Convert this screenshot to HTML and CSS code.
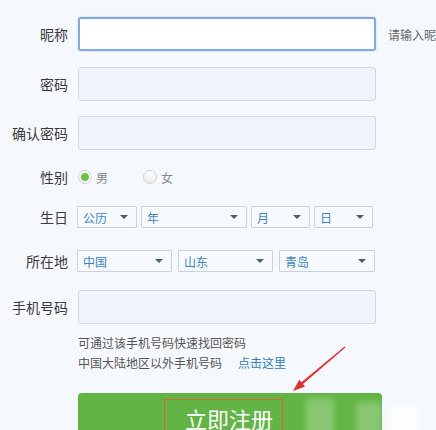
FILE: index.html
```html
<!DOCTYPE html>
<html lang="zh-CN">
<head>
<meta charset="utf-8">
<title>注册</title>
<link rel="stylesheet" href="styles.css">
</head>
<body>
<div class="page">
  <div class="form">
    <div class="row r-nick">
      <span class="lbl">昵称</span>
      <div class="txt focus"></div>
      <span class="tip">请输入昵称</span>
    </div>
    <div class="row r-pwd">
      <span class="lbl">密码</span>
      <div class="txt"></div>
    </div>
    <div class="row r-pwd2">
      <span class="lbl">确认密码</span>
      <div class="txt"></div>
    </div>
    <div class="row r-sex">
      <span class="lbl">性别</span>
      <span class="radio on"></span><span class="rtext">男</span>
      <span class="radio off"></span><span class="rtext">女</span>
    </div>
    <div class="row r-birth">
      <span class="lbl">生日</span>
      <div class="sels sels-birth">
        <div class="sel w60"><span>公历</span><i class="arr"></i></div>
        <div class="sel w106"><span>年</span><i class="arr"></i></div>
        <div class="sel w59"><span>月</span><i class="arr"></i></div>
        <div class="sel w59"><span>日</span><i class="arr"></i></div>
      </div>
    </div>
    <div class="row r-loc">
      <span class="lbl">所在地</span>
      <div class="sels sels-loc">
        <div class="sel w95"><span>中国</span><i class="arr"></i></div>
        <div class="sel w95"><span>山东</span><i class="arr"></i></div>
        <div class="sel w96"><span>青岛</span><i class="arr"></i></div>
      </div>
    </div>
    <div class="row r-phone">
      <span class="lbl">手机号码</span>
      <div class="txt"></div>
    </div>
    <div class="hints">
      <div>可通过该手机号码快速找回密码</div>
      <div>中国大陆地区以外手机号码<a class="link">点击这里</a></div>
    </div>
    <div class="btn"><span class="btn-text">立即注册</span></div>
  </div>

  <div class="blur b1"></div>
  <div class="blur b2"></div>
  <div class="blur b3"></div>
  <svg class="arrow" width="436" height="430" viewBox="0 0 436 430">
    <polygon points="344.6,346.5 301.4,382.3 299.3,379.8 293,391 305.1,386.6 303,384.1 345.4,347.5" fill="#e2302e"/>
  </svg>
</div>
</body>
</html>
```
FILE: styles.css
```css
html, body {
  margin: 0;
  padding: 0;
  overflow: hidden;
}
body {
  width: 436px;
  height: 430px;
  background: #f5f9fd;
  font-family: "Noto Sans CJK SC", "Noto Sans", sans-serif;
  color: #333;
}
.page {
  position: relative;
  width: 436px;
  height: 430px;
  overflow: hidden;
}
.form {
  display: flex;
  flex-direction: column;
}
.row {
  display: flex;
  align-items: center;
  white-space: nowrap;
}
.lbl {
  flex-shrink: 0;
  width: 68px;
  margin-right: 10px;
  text-align: right;
  font-size: 14px;
  color: #3a3a3a;
  line-height: 20px;
}
.txt {
  flex-shrink: 0;
  box-sizing: border-box;
  width: 298px;
  height: 34px;
  border: 1px solid #cfd8e2;
  border-radius: 3px;
  background: #eef4fa;
}
.txt.focus {
  border: 2px solid #83a9e2;
  background: #ffffff;
  box-shadow: 0 0 2px rgba(120, 160, 220, 0.5);
}
.tip {
  flex-shrink: 0;
  margin-left: 12px;
  font-size: 12px;
  color: #666;
}
.r-nick { margin-top: 17px; height: 34px; }
.r-pwd { margin-top: 16px; height: 34px; }
.r-pwd2 { margin-top: 15px; height: 34px; }
.r-sex { margin-top: 16px; height: 22px; }
.r-birth { margin-top: 18px; height: 22px; }
.r-loc { margin-top: 22px; height: 22px; }
.r-phone { margin-top: 18px; height: 34px; }

.radio {
  flex-shrink: 0;
  box-sizing: border-box;
  width: 14px;
  height: 14px;
  border-radius: 50%;
  border: 1px solid #cfcfcf;
  background: #f3f3f3;
  display: flex;
  align-items: center;
  justify-content: center;
}
.radio.on {
  background: #ffffff;
}
.radio.on::after {
  content: "";
  width: 8px;
  height: 8px;
  border-radius: 50%;
  background: #6cc33f;
}
.radio.off {
  margin-left: 35px;
  background: linear-gradient(#ffffff, #ececec);
}
.rtext {
  margin-left: 4px;
  font-size: 12px;
  color: #888;
}

.sels {
  display: flex;
  margin-left: -1px;
}
.sels-birth { gap: 4px; }
.sels-loc { gap: 6px; }
.sel {
  flex-shrink: 0;
  box-sizing: border-box;
  height: 22px;
  border: 1px solid #c9d3dd;
  border-radius: 1px;
  background: #f7fafd;
  display: flex;
  align-items: center;
  justify-content: space-between;
  padding: 0 8px 0 5px;
  font-size: 12px;
  color: #3d85c6;
}
.w60 { width: 60px; }
.w106 { width: 106px; }
.w59 { width: 59px; }
.w95 { width: 95px; }
.w96 { width: 96px; }
.arr {
  width: 0;
  height: 0;
  border-left: 4px solid transparent;
  border-right: 4px solid transparent;
  border-top: 4px solid #4b5d70;
}

.hints {
  margin-top: 9px;
  margin-left: 78px;
  font-size: 12px;
  line-height: 20px;
  color: #555;
}
.link {
  margin-left: 16px;
  color: #2f7dc0;
}

.btn {
  flex-shrink: 0;
  margin-top: 20px;
  margin-left: 78px;
  width: 304px;
  height: 50px;
  background: #62b545;
  border-radius: 4px 4px 0 0;
  display: flex;
  align-items: flex-start;
  padding-left: 86px;
  box-sizing: border-box;
  padding-top: 6px;
}
.btn-text {
  flex-shrink: 0;
  white-space: nowrap;
  border: 1px solid #d8652e;
  padding: 0 9px 0 20px;
  height: 40px;
  font-size: 22px;
  line-height: 36px;
  color: #ffffff;
}

.blur {
  position: absolute;
  background: rgba(255, 255, 255, 0.25);
  filter: blur(3px);
}
.b1 { left: 306px; top: 398px; width: 28px; height: 40px; }
.b2 { left: 356px; top: 402px; width: 26px; height: 36px; }
.b3 { left: 390px; top: 406px; width: 28px; height: 30px; background: rgba(255,255,255,0.8); }
.arrow {
  position: absolute;
  left: 0;
  top: 0;
  pointer-events: none;
}
```
